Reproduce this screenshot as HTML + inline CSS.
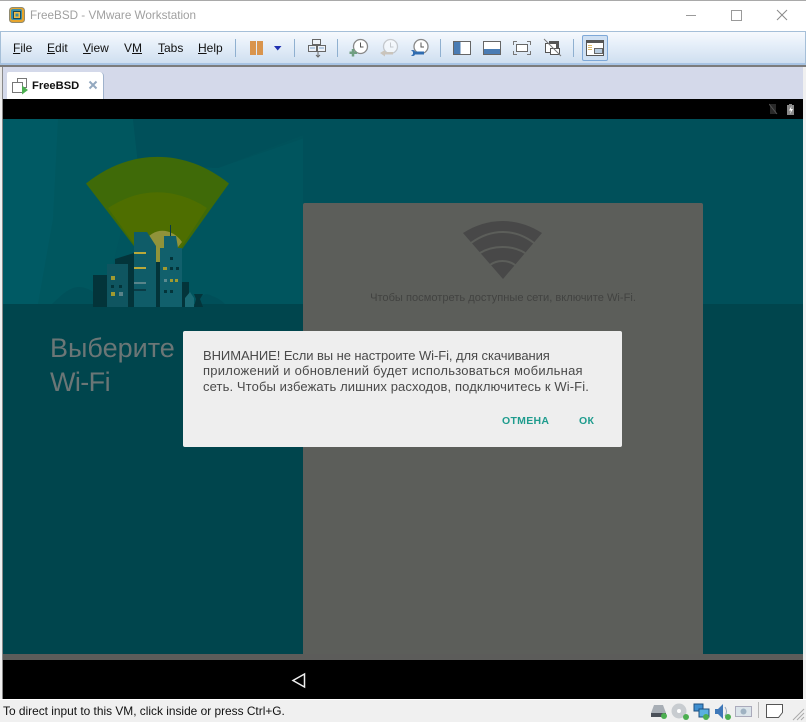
<!DOCTYPE html>
<html><head><meta charset="utf-8">
<style>
html,body{margin:0;padding:0;background:#f0f0f0}
#r{position:relative;width:806px;height:722px;overflow:hidden;font-family:"Liberation Sans","DejaVu Sans",sans-serif;background:#f0f0f0}
#r div,#r svg{position:absolute}
.m{top:41px;font-size:12px;color:#111;line-height:14px;white-space:nowrap}
.m u{text-decoration:underline}
.sep{width:1px;height:18px;top:39px;background:#8fb0d0}
</style></head><body>
<div id="r">
<!-- title bar -->
<div style="left:0;top:0;width:806px;height:32px;background:#fff;border-top:1px solid #a9a9a9;box-sizing:border-box"></div>
<svg style="left:9px;top:7px" width="16" height="16" viewBox="0 0 16 16"><rect x=".5" y=".5" width="15" height="15" rx="3" fill="#e8a52c" stroke="#8f8a70"/><rect x="2" y="2" width="11" height="11" rx="2" fill="#3a8fa8"/><rect x="4.500" y="4.500" width="7" height="7" fill="#f0bc44" stroke="#1c4a58"/><rect x="6.500" y="6.500" width="3" height="3" fill="#3a8fa8"/></svg>
<div style="left:30px;top:8px;font-size:11.700px;line-height:15px;color:#a0a0a0;white-space:nowrap">FreeBSD - VMware Workstation</div>
<div style="left:686px;top:15px;width:10px;height:1px;background:#9a9a9a"></div>
<div style="left:731px;top:10px;width:9px;height:9px;border:1px solid #9a9a9a"></div>
<svg style="left:776px;top:9px" width="12" height="12" viewBox="0 0 12 12"><path d="M1 1L11 11M11 1L1 11" stroke="#8a8a8a" stroke-width="1" fill="none"/></svg>
<!-- toolbar -->
<div style="left:0;top:31px;width:806px;height:34px;box-sizing:border-box;border:1px solid #a5bfd8;border-bottom:2px solid #a8c4e4;background:linear-gradient(#f6f9fd,#e6eff9 40%,#cfdff0)"></div>
<div style="left:0;top:65px;width:806px;height:2px;background:#7c7c7c"></div>
<div class="m" style="left:13px"><u>F</u>ile</div>
<div class="m" style="left:47px"><u>E</u>dit</div>
<div class="m" style="left:83px"><u>V</u>iew</div>
<div class="m" style="left:124px">V<u>M</u></div>
<div class="m" style="left:158px"><u>T</u>abs</div>
<div class="m" style="left:198px"><u>H</u>elp</div>
<div class="sep" style="left:235px"></div>
<div style="left:250px;top:41px;width:6px;height:14px;background:#d9944c"></div>
<div style="left:257px;top:41px;width:6px;height:14px;background:#d9944c"></div>
<svg style="left:274px;top:46px" width="8" height="5"><path d="M0 0H7.500L3.700 4.500Z" fill="#2030b0"/></svg>
<div class="sep" style="left:294px"></div>
<svg style="left:307px;top:38px" width="20" height="21" viewBox="0 0 20 21" fill="#eef2f8" stroke="#666"><rect x="5.500" y="1.500" width="8" height="5"/><rect x="1.500" y="7.500" width="8" height="6"/><rect x="10.500" y="7.500" width="8" height="6"/><path d="M3 10h5M12 10h5" stroke="#7fa4cc"/><path d="M11 14v5M9 17l2 2 2-2" fill="none"/></svg>
<div class="sep" style="left:337px"></div>
<svg style="left:349px;top:38px" width="20" height="20" viewBox="0 0 20 20"><circle cx="11.500" cy="8.500" r="7" fill="#fff" stroke="#888" stroke-width="1.300"/><path d="M11.500 4.500v4.500h3" stroke="#555" fill="none"/><path d="M4 11v7.500M0.500 14.700h7.500" stroke="#6f9e80" stroke-width="2.500"/></svg>
<svg style="left:380px;top:38px" width="20" height="20" viewBox="0 0 20 20" opacity=".55"><circle cx="10.500" cy="8.500" r="7" fill="#fff" stroke="#aaa" stroke-width="1.300"/><path d="M10.500 4.500v4.500h3" stroke="#aaa" fill="none"/><path d="M0 15l5-3v2h8v2.500H5v2z" fill="#bda98f"/></svg>
<svg style="left:410px;top:38px" width="20" height="20" viewBox="0 0 20 20"><circle cx="11" cy="8.500" r="7" fill="#fff" stroke="#888" stroke-width="1.300"/><path d="M11 4.500v4.500h3" stroke="#555" fill="none"/><path d="M1 12.500c2-1 3.500-.5 4 1h9v3H5c-.5 1.500-2 2-4 1l2-1.300v-2.400z" fill="#2f6cb0"/></svg>
<div class="sep" style="left:440px"></div>
<div style="left:453px;top:41px;width:18px;height:14px;box-sizing:border-box;border:1px solid #666;background:linear-gradient(90deg,#4a7cb4 42%,#fff 42%)"></div>
<div style="left:483px;top:41px;width:18px;height:14px;box-sizing:border-box;border:1px solid #666;background:linear-gradient(#fff 57%,#4a7cb4 57%)"></div>
<svg style="left:513px;top:41px" width="18" height="14" viewBox="0 0 18 14" fill="none"><rect x="3.500" y="3.500" width="11" height="7" stroke="#666" fill="#fff"/><path d="M.5 4V.5H4M14 .5h3.500V4M.5 10v3.500H4M14 13.500h3.500V10" stroke="#777"/></svg>
<svg style="left:543px;top:38px" width="19" height="19" viewBox="0 0 19 19"><rect x="6" y="3" width="10" height="10" fill="#555"/><rect x="2.500" y="5.500" width="11" height="9" fill="#fff" stroke="#555"/><rect x="7.500" y="10.500" width="9" height="6" fill="#fff" stroke="#555"/><path d="M1 1L18 18" stroke="#777"/></svg>
<div class="sep" style="left:573px"></div>
<div style="left:582px;top:35px;width:26px;height:26px;box-sizing:border-box;border:1px solid #7ea8d8;border-radius:2px;background:#cfe0f3"></div>
<div style="left:586px;top:40px;width:18px;height:16px;box-sizing:border-box;border:1px solid #555;border-top:3px solid #555;background:#fff"></div>
<div style="left:594px;top:48px;width:9px;height:6px;box-sizing:border-box;border:1px solid #666;background:#b8cce0"></div>
<div style="left:588px;top:45px;width:4px;height:1px;background:#dcb968;box-shadow:0 2px 0 #dcb968,0 4px 0 #dcb968"></div>
<!-- tab strip -->
<div style="left:3px;top:67px;width:800px;height:32px;background:#d4d9ea"></div>
<div style="left:0;top:67px;width:3px;height:32px;background:#e8e8e8"></div>
<div style="left:2px;top:67px;width:1px;height:632px;background:#8a8a8a"></div>
<div style="left:7px;top:72px;width:97px;height:27px;box-sizing:border-box;background:#fff;border-right:1px solid #9fb2cc;border-top-right-radius:4px;border-top-left-radius:2px"></div>
<svg style="left:12px;top:78px" width="16" height="17" viewBox="0 0 16 17" fill="#fff" stroke="#777"><rect x="5.500" y=".5" width="9" height="9"/><rect x=".5" y="4.500" width="10" height="10"/><path d="M10 7.500l6 4.500-6 4.500z" fill="#4caf50" stroke="none"/></svg>
<div style="left:32px;top:79px;font-size:11.200px;font-weight:bold;line-height:14px;color:#111">FreeBSD</div>
<svg style="left:88px;top:80px" width="10" height="10"><path d="M1.500 1.500L8.500 8.500M8.500 1.500L1.500 8.500" stroke="#93a8bf" stroke-width="2"/></svg>
<!-- VM -->
<div style="left:3px;top:99px;width:800px;height:600px;background:#000"></div>
<div style="left:3px;top:119px;width:800px;height:185px;background:#00525b"></div>
<svg style="left:3px;top:119px" width="800" height="185">
<path d="M0 0H130L135 45 100 185H0Z" fill="#00575f"/>
<path d="M0 0H55L50 100 35 185H0Z" fill="#005a64"/>
<path d="M100 185L135 45 215 49 310 16 300 185Z" fill="#00555e"/>
<path d="M130 0H800V185H300V16 L215 49 135 45Z" fill="#00505a"/>
</svg>
<div style="left:3px;top:304px;width:800px;height:350px;background:#00454d"></div>
<div style="left:3px;top:654px;width:800px;height:6px;background:#5c5c5a"></div>
<svg style="left:769px;top:103px" width="30" height="13" viewBox="0 0 30 13"><rect x="1" y="1" width="6" height="10" fill="#2a2a2a"/><path d="M0 1L8 11" stroke="#555"/><rect x="18" y="2" width="7" height="10" fill="#8a8a8a"/><rect x="20" y="1" width="3" height="1" fill="#8a8a8a"/><path d="M22.500 3L20 7.500h2l-1 3.500 3-5h-2z" fill="#fff"/></svg>
<!-- illustration -->
<svg style="left:60px;top:140px;overflow:visible" width="200" height="164" viewBox="0 0 200 164">
<path d="M26 43.500C70 8 125 8 169 43.500L100 140Z" fill="#3f6a08"/>
<path d="M48 68C80 47 115 47 147 68L100 140Z" fill="#4e6e00"/>
<path d="M85 102C92 87 112 87 122 102L100 130Z" fill="#90933a"/>
<path d="M-8 164C2 155 8 148 18 147 30 147 38 155 44 164Z" fill="#00515a"/>
<path d="M135 164C140 155 146 152 152 156 158 158 162 161 165 164Z" fill="#004f59"/>
<rect x="33" y="135" width="14" height="32" fill="#03343a"/>
<path d="M55 119L74 113V167H55Z" fill="#03343a"/>
<rect x="47" y="124" width="21" height="43" fill="#0f5560"/>
<path d="M74 92H87L96 106V167H74Z" fill="#0f5c68"/>
<rect x="74" y="112" width="12" height="2" fill="#b9a93a"/><rect x="74" y="127" width="12" height="2" fill="#b9a93a"/><rect x="74" y="142" width="12" height="2" fill="#58848a"/><rect x="74" y="149" width="12" height="2" fill="#0a3c46"/>
<rect x="96" y="122" width="6" height="45" fill="#03343a"/>
<rect x="110" y="85" width="1" height="12" fill="#0a3a44"/>
<path d="M104 96H116L118 108H122V167H100V108H104Z" fill="#11606c"/>
<rect x="122" y="142" width="7" height="25" fill="#03343a"/>
<rect x="51" y="136" width="4" height="4" fill="#a09a30"/><rect x="51" y="152" width="4" height="4" fill="#a09a30"/><rect x="59" y="152" width="4" height="4" fill="#5a8288"/><rect x="51" y="145" width="3" height="3" fill="#03343a"/><rect x="59" y="145" width="3" height="3" fill="#03343a"/>
<rect x="103" y="127" width="4" height="3" fill="#a09a30"/><rect x="110" y="139" width="3" height="3" fill="#a09a30"/><rect x="115" y="139" width="3" height="3" fill="#a09a30"/><rect x="104" y="139" width="3" height="3" fill="#5a8a90"/><rect x="110" y="117" width="3" height="3" fill="#03343a"/><rect x="116" y="127" width="3" height="3" fill="#03343a"/><rect x="110" y="127" width="3" height="3" fill="#03343a"/><rect x="110" y="150" width="3" height="3" fill="#03343a"/><rect x="104" y="150" width="3" height="3" fill="#03343a"/>
<path d="M125 167V158L130 152 134 158V167Z" fill="#1b6a74"/>
<path d="M134 154h9l-3 5 3 8h-9l2-8z" fill="#03343a"/>
</svg>
<!-- heading -->
<div style="left:50px;top:331px;font-size:27px;line-height:34px;color:#6b7676;white-space:nowrap">Выберите<br><span style="letter-spacing:-.6px">Wi-Fi</span></div>
<!-- panel -->
<div style="left:303px;top:203px;width:400px;height:451px;background:#5c5e5a;border-radius:2px 2px 0 0"></div>
<svg style="left:463px;top:220px" width="80" height="60" viewBox="0 0 80 60"><path d="M0 13C25 -3 54 -3 79 13L40 59Z" fill="#484848"/><path d="M8 23C28 8.300 52 8.300 71 23M17 33C30 25 49 25 62 33M27 45C34 39.700 45 39.700 52 45" fill="none" stroke="#5c5e5a" stroke-width="2"/></svg>
<div style="left:303px;top:292px;width:400px;text-align:center;font-size:11.100px;line-height:13px;color:#424341;white-space:nowrap">Чтобы посмотреть доступные сети, включите Wi-Fi.</div>
<!-- dialog -->
<div style="left:183px;top:331px;width:439px;height:116px;background:#eeeeee;border-radius:2px"></div>
<div style="left:203px;top:348px;font-size:13px;line-height:15.300px;color:#4a4a4a;white-space:nowrap"><span style="letter-spacing:-.07px">ВНИМАНИЕ! Если вы не настроите Wi-Fi, для скачивания</span><br><span style="letter-spacing:.24px">приложений и обновлений будет использоваться мобильная</span><br><span style="letter-spacing:.11px">сеть. Чтобы избежать лишних расходов, подключитесь к Wi-Fi.</span></div>
<div style="left:502px;top:414px;font-size:10.500px;font-weight:bold;line-height:14px;letter-spacing:.3px;color:#1f9c8e;white-space:nowrap">ОТМЕНА</div>
<div style="left:579px;top:414px;font-size:10.500px;font-weight:bold;line-height:14px;letter-spacing:.3px;color:#1f9c8e;white-space:nowrap">ОК</div>
<svg style="left:291px;top:672px" width="16" height="17" viewBox="0 0 16 17"><path d="M13.500 2L2 8.500 13.500 15Z" fill="none" stroke="#eee" stroke-width="1.500"/></svg>
<!-- status bar -->
<div style="left:0;top:699px;width:806px;height:23px;background:#f0f0f0;border-top:1px solid #fff;box-sizing:border-box"></div>
<div style="left:3px;top:704px;font-size:11.900px;line-height:14px;color:#111;white-space:nowrap">To direct input to this VM, click inside or press Ctrl+G.</div>
<svg style="left:650px;top:703px" width="18" height="17" viewBox="0 0 18 17"><path d="M4 2h9l3 8H1z" fill="#a8aeb5"/><rect x="1" y="10" width="15" height="4" fill="#4a5058"/><circle cx="14" cy="13" r="3" fill="#4caf50"/></svg>
<svg style="left:671px;top:703px" width="18" height="17" viewBox="0 0 18 17"><circle cx="8" cy="8" r="7.500" fill="#c8ccd0"/><circle cx="8" cy="8" r="2" fill="#fff"/><circle cx="15" cy="14" r="3" fill="#4caf50"/></svg>
<svg style="left:693px;top:703px" width="18" height="17" viewBox="0 0 18 17"><rect x="1" y="1" width="9" height="7" fill="#3f8fd0" stroke="#1f4f80"/><rect x="6" y="6" width="10" height="8" fill="#5ab0e0" stroke="#1f4f80"/><circle cx="13" cy="14" r="3" fill="#4caf50"/></svg>
<svg style="left:714px;top:703px" width="18" height="17" viewBox="0 0 18 17"><path d="M1 6h3l5-5v15l-5-5H1z" fill="#3f78b8"/><path d="M11 4c2 3 2 6 0 9" stroke="#9ab" fill="none"/><circle cx="14" cy="14" r="3" fill="#4caf50"/></svg>
<svg style="left:735px;top:704px" width="17" height="14" viewBox="0 0 17 14"><rect x=".5" y="2.500" width="16" height="10" fill="#dbe4ea" stroke="#aab"/><circle cx="8.500" cy="7.500" r="3" fill="#9fb2c2"/></svg>
<div style="left:758px;top:702px;width:1px;height:16px;background:#b8b8b8"></div>
<svg style="left:766px;top:704px" width="18" height="14" viewBox="0 0 18 14"><path d="M.5.500h16v8l-4 5h-12z" fill="#fff" stroke="#555"/></svg>
<svg style="left:792px;top:708px" width="13" height="13"><path d="M12 1L1 12M12 5L5 12M12 9L9 12" stroke="#aaa"/></svg>
</div>
</body></html>
